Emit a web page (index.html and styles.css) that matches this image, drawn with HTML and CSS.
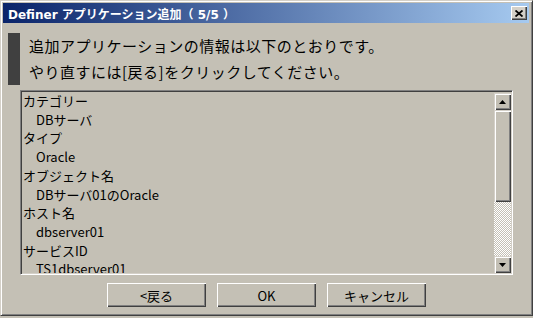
FILE: index.html
```html
<!DOCTYPE html>
<html lang="ja">
  <head>
    <meta charset="UTF-8" />
    <title>Definer アプリケーション追加</title>
    <link rel="stylesheet" href="styles.css">
  </head>
  <body>
    <div class="window">
      <div class="titlebar">
        <span class="title">Definer アプリケーション追加（ 5/5 ）</span>
        <button class="close" aria-label="閉じる">
          <svg width="8" height="7" viewBox="0 0 8 7">
            <path d="M0.5 0.5 L7.5 6.5 M7.5 0.5 L0.5 6.5" stroke="#000" stroke-width="1.8" />
          </svg>
        </button>
      </div>

      <div class="content">
        <!-- Message -->
        <div class="message">
          <div class="marker"></div>
          <p>追加アプリケーションの情報は以下のとおりです。<br>やり直すには[戻る]をクリックしてください。</p>
        </div>

        <!-- Summary list -->
        <div class="listbox">
          <ul class="items">
            <li>カテゴリー</li>
            <li class="value">DBサーバ</li>
            <li>タイプ</li>
            <li class="value">Oracle</li>
            <li>オブジェクト名</li>
            <li class="value">DBサーバ01のOracle</li>
            <li>ホスト名</li>
            <li class="value">dbserver01</li>
            <li>サービスID</li>
            <li class="value">TS1dbserver01</li>
          </ul>
          <div class="scrollbar">
            <div class="arrow">
              <svg width="7" height="4" viewBox="0 0 7 4"><path d="M3.5 0 L7 4 L0 4 Z" fill="#000" /></svg>
            </div>
            <div class="thumb"></div>
            <div class="track"></div>
            <div class="arrow">
              <svg width="7" height="4" viewBox="0 0 7 4"><path d="M0 0 L7 0 L3.5 4 Z" fill="#000" /></svg>
            </div>
          </div>
        </div>

        <!-- Buttons -->
        <div class="buttons">
          <button class="btn">&lt;戻る</button>
          <button class="btn">OK</button>
          <button class="btn">キャンセル</button>
        </div>
      </div>
    </div>
  </body>
</html>
```

FILE: styles.css
```css
* {
  margin: 0;
  padding: 0;
  box-sizing: border-box;
}

body {
  background-color: #c4c0b5;
  font-family: "Noto Sans CJK JP", "DejaVu Sans", sans-serif;
  color: #000;
}

/* Window frame */
.window {
  width: 533px;
  height: 316px;
  background-color: #c4c0b5;
  border-top: 1px solid #d4d0c8;
  border-left: 1px solid #d4d0c8;
  border-right: 1px solid #404040;
  border-bottom: 1px solid #404040;
  box-shadow: inset 1px 1px 0 #fff, inset -1px -1px 0 #808080;
  padding: 2px;
  display: flex;
  flex-direction: column;
}

/* Title bar */
.titlebar {
  height: 20px;
  margin-right: 1px;
  background: linear-gradient(to right, #0a246a, #a6caf0);
  display: flex;
  align-items: center;
  justify-content: space-between;
  padding: 0 2px 0 5px;
}

.title {
  color: #fff;
  font-weight: bold;
  font-size: 12px;
  font-family: "DejaVu Sans", "Noto Sans CJK JP", sans-serif;
}

.close {
  width: 16px;
  height: 14px;
  background-color: #d4d0c8;
  border: none;
  box-shadow: inset 1px 1px 0 #fff, inset -1px -1px 0 #404040, inset -2px -2px 0 #808080;
  display: flex;
  align-items: center;
  justify-content: center;
}

/* Dialog body */
.content {
  flex: 1;
  display: flex;
  flex-direction: column;
  padding: 10px 17px 0 5px;
}

.message {
  display: flex;
  gap: 9px;
}

.marker {
  width: 12px;
  height: 52px;
  background-color: #404040;
}

.message p {
  font-size: 15px;
  line-height: 26px;
  letter-spacing: 0.5px;
}

/* Listbox */
.listbox {
  margin: 5px 0 0 12px;
  height: 185px;
  display: flex;
  border-top: 1px solid #808080;
  border-left: 1px solid #808080;
  border-right: 1px solid #fff;
  border-bottom: 1px solid #fff;
  box-shadow: inset 1px 1px 0 #404040, inset -1px -1px 0 #d4d0c8;
  padding: 2px 1px 1px 2px;
  overflow: hidden;
}

.items {
  flex: 1;
  list-style: none;
  font-size: 13px;
  line-height: 18.7px;
  overflow: hidden;
  margin-top: -1px;
}

.items .value {
  padding-left: 13px;
}

.scrollbar {
  width: 17px;
  display: flex;
  flex-direction: column;
}

.arrow,
.thumb {
  background-color: #c4c0b5;
  box-shadow: inset 1px 1px 0 #d4d0c8, inset 2px 2px 0 #fff, inset -1px -1px 0 #404040, inset -2px -2px 0 #808080;
}

.arrow {
  height: 17px;
  display: flex;
  align-items: center;
  justify-content: center;
}

.thumb {
  height: 92px;
}

.track {
  flex: 1;
  background-color: #fff;
  background-image: conic-gradient(#c4c0b5 25%, #fff 0 50%, #c4c0b5 0 75%, #fff 0);
  background-size: 2px 2px;
}

/* Buttons */
.buttons {
  display: flex;
  justify-content: center;
  gap: 11px;
  margin-top: 8px;
  padding-left: 12px;
}

.btn {
  width: 99px;
  height: 24px;
  background-color: #c4c0b5;
  border: none;
  box-shadow: inset 1px 1px 0 #fff, inset -1px -1px 0 #404040, inset -2px -2px 0 #808080;
  font-family: "Noto Sans CJK JP", sans-serif;
  font-size: 13px;
  color: #000;
}
```
